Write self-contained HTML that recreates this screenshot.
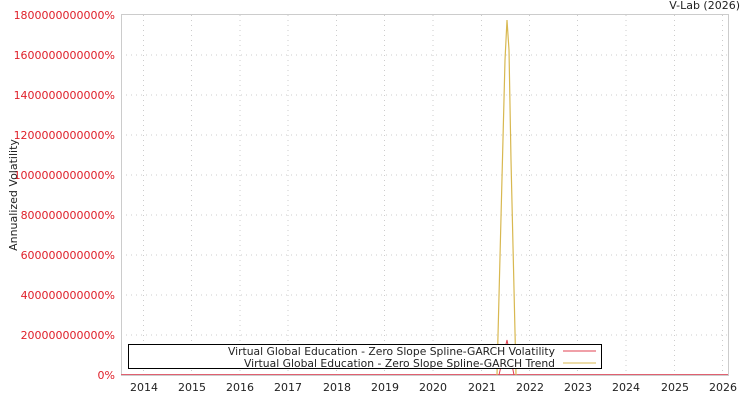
<!DOCTYPE html>
<html><head><style>
body{margin:0;background:#fff;width:750px;height:400px;overflow:hidden;font-family:"DejaVu Sans","Liberation Sans",sans-serif;}
</style></head><body>
<svg width="750" height="400" xmlns="http://www.w3.org/2000/svg" font-family="DejaVu Sans, Liberation Sans, sans-serif" font-size="11">
<rect x="121.5" y="14.5" width="607" height="361" fill="#fff" stroke="#ccc"/>
<g stroke="#ccc" stroke-dasharray="1,4">
<line x1="121" x2="728" y1="55" y2="55"/><line x1="121" x2="728" y1="95" y2="95"/><line x1="121" x2="728" y1="135" y2="135"/><line x1="121" x2="728" y1="175" y2="175"/><line x1="121" x2="728" y1="215" y2="215"/><line x1="121" x2="728" y1="255" y2="255"/><line x1="121" x2="728" y1="295" y2="295"/><line x1="121" x2="728" y1="335" y2="335"/>
<line x1="143.5" x2="143.5" y1="15" y2="375"/><line x1="191.5" x2="191.5" y1="15" y2="375"/><line x1="240" x2="240" y1="15" y2="375"/><line x1="288" x2="288" y1="15" y2="375"/><line x1="336.5" x2="336.5" y1="15" y2="375"/><line x1="384.5" x2="384.5" y1="15" y2="375"/><line x1="433" x2="433" y1="15" y2="375"/><line x1="481.5" x2="481.5" y1="15" y2="375"/><line x1="529.5" x2="529.5" y1="15" y2="375"/><line x1="577.5" x2="577.5" y1="15" y2="375"/><line x1="626" x2="626" y1="15" y2="375"/><line x1="674.5" x2="674.5" y1="15" y2="375"/><line x1="722.5" x2="722.5" y1="15" y2="375"/>
</g>
<line x1="121" x2="728" y1="374.5" y2="374.5" stroke="#e06070"/>
<polyline points="497,375 505,60 507,20 509,50 511,160 516,375" fill="none" stroke="#d8b850" stroke-width="1.2"/>
<polyline points="499,375 507,340 514,375" fill="none" stroke="#e04050"/>
<g fill="#e0202a" text-anchor="end">
<text x="115" y="19">1800000000000%</text><text x="115" y="59">1600000000000%</text><text x="115" y="99">1400000000000%</text><text x="115" y="139">1200000000000%</text><text x="115" y="179">1000000000000%</text><text x="115" y="219">800000000000%</text><text x="115" y="259">600000000000%</text><text x="115" y="299">400000000000%</text><text x="115" y="339">200000000000%</text><text x="115" y="379">0%</text>
</g>
<g fill="#222" text-anchor="middle">
<text x="144" y="391">2014</text><text x="192" y="391">2015</text><text x="240" y="391">2016</text><text x="288" y="391">2017</text><text x="337" y="391">2018</text><text x="385" y="391">2019</text><text x="433" y="391">2020</text><text x="482" y="391">2021</text><text x="530" y="391">2022</text><text x="578" y="391">2023</text><text x="626" y="391">2024</text><text x="675" y="391">2025</text><text x="723" y="391">2026</text>
</g>
<text x="740" y="9" text-anchor="end" fill="#222">V-Lab (2026)</text>
<text transform="translate(17,195) rotate(-90)" text-anchor="middle" fill="#222">Annualized Volatility</text>
<rect x="128.5" y="344.5" width="473" height="24" fill="#fff" stroke="#000"/>
<text x="228" y="355" textLength="327" lengthAdjust="spacingAndGlyphs" fill="#222">Virtual Global Education - Zero Slope Spline-GARCH Volatility</text>
<text x="244" y="367" textLength="311" lengthAdjust="spacingAndGlyphs" fill="#222">Virtual Global Education - Zero Slope Spline-GARCH Trend</text>
<line x1="563" x2="596" y1="351" y2="351" stroke="#e04050"/>
<line x1="563" x2="596" y1="363" y2="363" stroke="#d8b850"/>
</svg>
</body></html>
